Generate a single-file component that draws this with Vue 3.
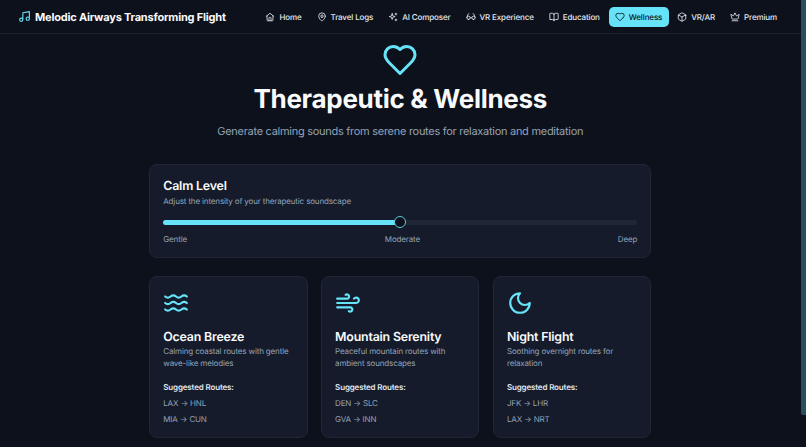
<script setup>
const links = [
  { label: "Home", d: "M3 10.500 12 3l9 7.500M5 9v11a1 1 0 0 0 1 1h12a1 1 0 0 0 1-1V9M9.500 21v-7a1 1 0 0 1 1-1h3a1 1 0 0 1 1 1v7" },
  { label: "Travel Logs", d: "M20 10c0 6-8 12-8 12s-8-6-8-12a8 8 0 0 1 16 0ZM12 13a3 3 0 1 0 0-6 3 3 0 0 0 0 6Z" },
  { label: "AI Composer", d: "M10 4l1.600 5.400L17 11l-5.400 1.600L10 18l-1.600-5.400L3 11l5.400-1.600L10 4ZM19 3v4M17 5h4M19 17v4M17 19h4" },
  { label: "VR Experience", d: "M6 18a4 4 0 1 0 0-8 4 4 0 0 0 0 8ZM18 18a4 4 0 1 0 0-8 4 4 0 0 0 0 8ZM10 14c1.200-1 2.800-1 4 0M2.200 13 5 5.500C5.400 4.500 6.200 4 7 4M21.800 13 19 5.500c-.4-1-1.200-1.500-2-1.500" },
  { label: "Education", d: "M12 7v14M3 18a1 1 0 0 1-1-1V4a1 1 0 0 1 1-1h5a4 4 0 0 1 4 4 4 4 0 0 1 4-4h5a1 1 0 0 1 1 1v13a1 1 0 0 1-1 1h-6a3 3 0 0 0-3 3 3 3 0 0 0-3-3H3Z" },
  { label: "Wellness", active: true, d: "M19 14c1.500-1.500 3-3.200 3-5.500A5.500 5.500 0 0 0 16.500 3c-1.800 0-3 .5-4.500 2-1.500-1.500-2.700-2-4.500-2A5.500 5.500 0 0 0 2 8.500c0 2.300 1.500 4 3 5.500l7 7 7-7Z" },
  { label: "VR/AR", d: "M21 8a2 2 0 0 0-1-1.700l-7-4a2 2 0 0 0-2 0l-7 4A2 2 0 0 0 3 8v8a2 2 0 0 0 1 1.700l7 4a2 2 0 0 0 2 0l7-4a2 2 0 0 0 1-1.700V8ZM3.300 7 12 12l8.700-5M12 22V12" },
  { label: "Premium", d: "M11.600 3.300a.5.5 0 0 1 .8 0l3 5.700a1 1 0 0 0 1.500.3l4.300-3.700a.5.5 0 0 1 .8.5l-2.800 10.200a1 1 0 0 1-1 .7H5.800a1 1 0 0 1-1-.7L2 5.900a.5.5 0 0 1 .8-.5l4.300 3.700a1 1 0 0 0 1.500-.3l3-5.800ZM5 21h14" },
];

const cards = [
  {
    title: "Ocean Breeze",
    text: "Calming coastal routes with gentle wave-like melodies",
    routes: ["LAX → HNL", "MIA → CUN"],
    d: "M2 6c.6.5 1.200 1 2.500 1C7 7 7 5 9.500 5c2.600 0 2.400 2 5 2 2.500 0 2.500-2 5-2 1.300 0 1.900.5 2.500 1M2 12c.6.5 1.200 1 2.500 1 2.500 0 2.500-2 5-2 2.600 0 2.400 2 5 2 2.500 0 2.500-2 5-2 1.300 0 1.900.5 2.500 1M2 18c.6.5 1.200 1 2.500 1 2.500 0 2.500-2 5-2 2.600 0 2.400 2 5 2 2.500 0 2.500-2 5-2 1.300 0 1.900.5 2.500 1",
  },
  {
    title: "Mountain Serenity",
    text: "Peaceful mountain routes with ambient soundscapes",
    routes: ["DEN → SLC", "GVA → INN"],
    d: "M12.800 19.600A2 2 0 1 0 14 16H2M17.500 8a2.500 2.500 0 1 1 2 4H2M9.800 4.400A2 2 0 1 1 11 8H2",
  },
  {
    title: "Night Flight",
    text: "Soothing overnight routes for relaxation",
    routes: ["JFK → LHR", "LAX → NRT"],
    d: "M12 3a6 6 0 0 0 9 9 9 9 0 1 1-9-9Z",
  },
];
</script>

<template>
  <div class="page">
    <nav class="nav">
      <div class="brand">
        <svg class="brand-icon" viewBox="0 0 24 24"><path d="M9 18V5l12-2v13M9 18a3 3 0 1 1-6 0 3 3 0 0 1 6 0ZM21 16a3 3 0 1 1-6 0 3 3 0 0 1 6 0Z" /></svg>
        <span>Melodic Airways Transforming Flight</span>
      </div>
      <div class="links">
        <a v-for="link in links" :key="link.label" class="link" :class="{ active: link.active }">
          <svg viewBox="0 0 24 24"><path :d="link.d" /></svg>
          {{ link.label }}
        </a>
      </div>
    </nav>

    <main class="main">
      <header class="hero">
        <svg class="hero-icon" viewBox="0 0 24 24"><path d="M19 14c1.500-1.500 3-3.200 3-5.500A5.500 5.500 0 0 0 16.500 3c-1.800 0-3 .5-4.500 2-1.500-1.500-2.700-2-4.500-2A5.500 5.500 0 0 0 2 8.500c0 2.300 1.500 4 3 5.500l7 7 7-7Z" /></svg>
        <h1>Therapeutic &amp; Wellness</h1>
        <p>Generate calming sounds from serene routes for relaxation and meditation</p>
      </header>

      <section class="panel calm">
        <h2>Calm Level</h2>
        <p class="muted">Adjust the intensity of your therapeutic soundscape</p>
        <div class="track">
          <div class="fill"></div>
          <div class="thumb"></div>
        </div>
        <div class="scale">
          <span>Gentle</span>
          <span>Moderate</span>
          <span>Deep</span>
        </div>
      </section>

      <section class="cards">
        <article v-for="card in cards" :key="card.title" class="panel card">
          <svg class="card-icon" viewBox="0 0 24 24"><path :d="card.d" /></svg>
          <h2>{{ card.title }}</h2>
          <p class="muted desc">{{ card.text }}</p>
          <h3>Suggested Routes:</h3>
          <div v-for="route in card.routes" :key="route" class="route">{{ route }}</div>
        </article>
      </section>
    </main>

    <div class="scrollbar"></div>
  </div>
</template>

<style>
html,
body {
  margin: 0;
  height: 100%;
  overflow: hidden;
  background: #0d111b;
}
</style>

<style scoped>
.page {
  position: relative;
  height: 447px;
  overflow: hidden;
  box-sizing: border-box;
  padding-right: 5.500px;
  background: #0d111b;
  color: #f8fafc;
  font-family: Inter, "Liberation Sans", sans-serif;
  text-rendering: geometricPrecision;
}

.scrollbar {
  position: absolute;
  top: 0;
  right: 0;
  width: 5px;
  height: 415px;
  border-radius: 0 0 0 2px;
  background: #27505c;
}

svg {
  fill: none;
  stroke: currentColor;
  stroke-width: 2;
  stroke-linecap: round;
  stroke-linejoin: round;
}

.nav {
  display: flex;
  align-items: center;
  justify-content: space-between;
  height: 33px;
  padding: 0 16.500px 0 18px;
  border-bottom: 1px solid #1a202c;
}

.brand {
  display: flex;
  align-items: center;
  gap: 4px;
  font-size: 11px;
  font-weight: 700;
  letter-spacing: -0.2px;
  white-space: nowrap;
}

.brand-icon {
  width: 13px;
  height: 13px;
  color: #67e3f9;
}

.links {
  display: flex;
  align-items: center;
  gap: 2px;
}

.link {
  display: flex;
  align-items: center;
  gap: 4px;
  height: 20px;
  padding: 0 7px 0 6px;
  box-sizing: border-box;
  border-radius: 5px;
  font-size: 8px;
  font-weight: 500;
  letter-spacing: -0.13px;
  color: #e2e8f0;
  white-space: nowrap;
}

.link svg {
  width: 10px;
  height: 10px;
}

.active {
  background: #67e3f9;
  color: #0d111b;
}

.main {
  width: 502px;
  margin: 0 auto;
}

.hero {
  display: flex;
  flex-direction: column;
  align-items: center;
  padding-top: 8px;
}

.hero-icon {
  width: 36px;
  height: 36px;
  color: #67e3f9;
}

h1 {
  margin: 4px 0 0;
  font-size: 26px;
  line-height: 36px;
  font-weight: 700;
  letter-spacing: -0.3px;
}

.hero p {
  margin: 4px 0 0;
  font-size: 11px;
  line-height: 18px;
  letter-spacing: -0.28px;
  color: #94a3b8;
  white-space: nowrap;
}

.panel {
  box-sizing: border-box;
  background: #151b2a;
  border: 1px solid #1f2635;
  border-radius: 8px;
}

.calm {
  height: 94px;
  margin-top: 24px;
  padding: 12px 13px;
}

h2 {
  margin: 0;
  font-size: 12.400px;
  line-height: 17px;
  font-weight: 600;
  letter-spacing: -0.2px;
}

.muted {
  margin: 0;
  font-size: 8px;
  line-height: 11.500px;
  letter-spacing: -0.15px;
  color: #94a3b8;
}

.calm .muted {
  margin-top: 2px;
}

.track {
  position: relative;
  height: 5px;
  margin-top: 12px;
  border-radius: 3px;
  background: #1f2635;
}

.fill {
  width: 50%;
  height: 100%;
  border-radius: 3px;
  background: #67e3f9;
}

.thumb {
  position: absolute;
  left: 50%;
  top: 50%;
  box-sizing: border-box;
  width: 12px;
  height: 12px;
  margin: -6px 0 0 -6px;
  border: 1.500px solid #5cc9de;
  border-radius: 50%;
  background: #0d111b;
}

.scale {
  display: flex;
  justify-content: space-between;
  margin-top: 9px;
  font-size: 8px;
  line-height: 11px;
  letter-spacing: -0.15px;
  color: #94a3b8;
}

.cards {
  display: grid;
  grid-template-columns: repeat(3, 1fr);
  gap: 13.500px;
  margin-top: 18px;
}

.card {
  height: 162px;
  padding: 13px;
}

.card-icon {
  display: block;
  width: 26px;
  height: 26px;
  color: #67e3f9;
}

.card h2 {
  margin-top: 12px;
}

.desc {
  margin-top: 1px;
}

h3 {
  margin: 13px 0 0;
  font-size: 8px;
  line-height: 11px;
  font-weight: 600;
  letter-spacing: -0.15px;
  color: #e2e8f0;
}

.route {
  margin-top: 5px;
  font-size: 8px;
  line-height: 11px;
  letter-spacing: -0.15px;
  color: #94a3b8;
}
</style>
